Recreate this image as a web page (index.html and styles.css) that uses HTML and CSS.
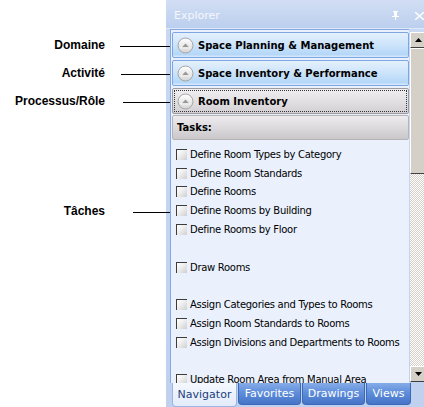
FILE: index.html
```html
<!DOCTYPE html>
<html>
<head>
<meta charset="utf-8">
<link rel="stylesheet" href="styles.css">
</head>
<body>
<div class="page">
  <div class="notes">
    <div class="note n-dom"><span class="lbl">Domaine</span><span class="line"></span></div>
    <div class="note n-act"><span class="lbl">Activité</span><span class="line"></span></div>
    <div class="note n-proc"><span class="lbl">Processus/Rôle</span><span class="line"></span></div>
    <div class="note n-task"><span class="lbl">Tâches</span><span class="line"></span></div>
  </div>
  <div class="panel">
    <div class="hdr">
      <span class="title">Explorer</span>
      <svg class="pin" width="7" height="9" viewBox="0 0 7 9"><path d="M1 0h5v1H5v4h2v1H4v3H3V6H0V5h2V1H1z" fill="#fff"/></svg>
      <svg class="close" width="9" height="8" viewBox="0 0 9 8"><path d="M1 0l3.5 3 3.5-3h1v1L5.5 4 9 7v1H8L4.5 5 1 8H0V7l3.5-3L0 1V0z" fill="#fff"/></svg>
    </div>
    <div class="main">
      <div class="content">
        <div class="sect blue"><span class="chev"><svg width="17" height="17" viewBox="0 0 17 17"><defs><linearGradient id="g1" x1="0" y1="0" x2="0" y2="1"><stop offset="0" stop-color="#ffffff"/><stop offset="1" stop-color="#d6d6d6"/></linearGradient></defs><circle cx="8.5" cy="8.5" r="7.5" fill="url(#g1)" stroke="#a4a4a4"/><path d="M3.8 10.8 8.5 5.8l4.7 5z" fill="#9a9a9a" stroke="#fff" stroke-width="1"/></svg></span>Space Planning &amp; Management</div>
        <div class="sect blue"><span class="chev"><svg width="17" height="17" viewBox="0 0 17 17"><circle cx="8.5" cy="8.5" r="7.5" fill="url(#g1)" stroke="#a4a4a4"/><path d="M3.8 10.8 8.5 5.8l4.7 5z" fill="#9a9a9a" stroke="#fff" stroke-width="1"/></svg></span>Space Inventory &amp; Performance</div>
        <div class="sect gray"><div class="focus"><span class="chev"><svg width="17" height="17" viewBox="0 0 17 17"><circle cx="8.5" cy="8.5" r="7.5" fill="url(#g1)" stroke="#a4a4a4"/><path d="M3.8 10.8 8.5 5.8l4.7 5z" fill="#9a9a9a" stroke="#fff" stroke-width="1"/></svg></span>Room Inventory</div></div>
        <div class="tasks">Tasks:</div>
        <ul class="items">
          <li><i class="cb"></i>Define Room Types by Category</li>
          <li><i class="cb"></i>Define Room Standards</li>
          <li><i class="cb"></i>Define Rooms</li>
          <li><i class="cb"></i>Define Rooms by Building</li>
          <li><i class="cb"></i>Define Rooms by Floor</li>
          <li class="gap"></li>
          <li><i class="cb"></i>Draw Rooms</li>
          <li class="gap"></li>
          <li><i class="cb"></i>Assign Categories and Types to Rooms</li>
          <li><i class="cb"></i>Assign Room Standards to Rooms</li>
          <li><i class="cb"></i>Assign Divisions and Departments to Rooms</li>
          <li class="gap"></li>
          <li><i class="cb"></i>Update Room Area from Manual Area</li>
        </ul>
      </div>
      <div class="sbar">
        <div class="sbtn"><svg width="7" height="4" viewBox="0 0 7 4"><path d="M3.5 0 7 4H0z" fill="#000"/></svg></div>
        <div class="thumb"></div>
        <div class="track"></div>
        <div class="sbtn"><svg width="7" height="4" viewBox="0 0 7 4"><path d="M0 0h7L3.5 4z" fill="#000"/></svg></div>
      </div>
    </div>
    <div class="tabs">
      <div class="tab on">Navigator</div>
      <div class="tab">Favorites</div>
      <div class="tab">Drawings</div>
      <div class="tab">Views</div>
    </div>
  </div>
</div>
</body>
</html>
```
FILE: styles.css
```css
html, body {
  margin: 0;
  padding: 0;
  background: #fff;
  overflow: hidden;
}
.page {
  display: flex;
  width: 424px;
  height: 407px;
  overflow: hidden;
}
.notes {
  width: 166px;
  flex: none;
  font-family: "Liberation Sans", Arial, sans-serif;
  font-weight: bold;
  font-size: 12px;
  color: #000;
  padding-top: 37px;
}
.note {
  display: flex;
  align-items: center;
  height: 16px;
}
.lbl {
  width: 105px;
  text-align: right;
  flex: none;
}
.line {
  flex: 1;
  height: 1px;
  background: #000;
  margin-right: -4px;
  position: relative;
  top: 1px;
}
.n-dom .line { margin-left: 15px; }
.n-act { margin-top: 12px; }
.n-act .line { margin-left: 16px; }
.n-proc { margin-top: 12px; }
.n-proc .line { margin-left: 18px; }
.n-task { margin-top: 94px; }
.n-task .line { margin-left: 28px; }

.panel {
  width: 259px;
  flex: none;
  height: 407px;
  display: flex;
  flex-direction: column;
  background: linear-gradient(#c9d9f3, #bfd1ef);
  font-family: "DejaVu Sans", Verdana, sans-serif;
}
.hdr {
  height: 29px;
  flex: none;
  display: flex;
  align-items: center;
  background: linear-gradient(#d2def4, #bccfee);
  border-bottom: 1px solid #dfe8f8;
  box-sizing: border-box;
  padding-top: 3px;
}
.title {
  margin-left: 8px;
  font-size: 11px;
  color: #f4f7fc;
  flex: 1;
}
.pin { margin-right: 16px; }
.close { margin-right: 1px; }

.main {
  flex: 1;
  display: flex;
  min-height: 0;
  margin-left: 4px;
}
.content {
  width: 239px;
  flex: none;
  box-sizing: border-box;
  border-left: 1px solid #85a8e0;
  border-top: 1px solid #85a8e0;
  background: #eaf1fd;
  padding: 2px 0 0 1px;
  overflow: hidden;
}
.sect {
  height: 26px;
  box-sizing: border-box;
  display: flex;
  align-items: center;
  font-weight: bold;
  font-size: 10px;
  color: #000;
  border-radius: 2px;
  margin-bottom: 1px;
}
.sect.blue {
  border: 1px solid #7ea6e2;
  background: linear-gradient(#e4f0fd 0%, #cfe5fb 45%, #b4d7f8 90%, #dcebfc 100%);
  padding-left: 4px;
  margin-bottom: 2px;
}
.sect.gray {
  border: 1px solid #9d9a9e;
  background: linear-gradient(#f1eff2 0%, #e3e0e4 50%, #d3cfd4 100%);
  padding: 1px;
}
.focus {
  flex: 1;
  align-self: stretch;
  display: flex;
  align-items: center;
  outline: 1px dotted #333;
  outline-offset: -1px;
  padding-left: 3px;
}
.chev {
  width: 17px;
  height: 17px;
  margin-right: 4px;
  display: block;
}
.chev svg { display: block; }
.tasks {
  height: 25px;
  box-sizing: border-box;
  display: flex;
  align-items: center;
  padding-left: 4px;
  font-weight: bold;
  font-size: 10px;
  border: 1px solid #b6b3b7;
  border-radius: 2px;
  background: linear-gradient(#eeecee 0%, #dcdadc 50%, #c9c7c9 100%);
}
.items {
  list-style: none;
  margin: 0;
  padding: 5px 0 0 4px;
  font-size: 10px;
  letter-spacing: -0.3px;
  color: #000;
}
.items li {
  height: 18.8px;
  display: flex;
  align-items: center;
  white-space: nowrap;
}
.cb {
  width: 11px;
  height: 11px;
  box-sizing: border-box;
  flex: none;
  border-top: 1px solid #3c3c3c;
  border-left: 1px solid #3c3c3c;
  background: linear-gradient(135deg, #ffffff 0%, #f0f0f0 40%, #cfcfcf 100%);
  margin-right: 3px;
}

.sbar {
  width: 16px;
  flex: none;
  display: flex;
  flex-direction: column;
  padding-top: 3px;
  margin-left: 1px;
}
.sbtn {
  height: 16px;
  flex: none;
  box-sizing: border-box;
  background: #d4d0c8;
  border: 1px solid;
  border-color: #fff #404040 #404040 #fff;
  display: flex;
  align-items: center;
  justify-content: center;
}
.thumb {
  height: 126px;
  flex: none;
  box-sizing: border-box;
  background: #d4d0c8;
  border: 1px solid;
  border-color: #fff #404040 #404040 #fff;
}
.track {
  flex: 1;
  background: repeating-conic-gradient(#d4d0c8 0 25%, #fff 0 50%) 0 0 / 2px 2px;
}
.sbar .sbtn:last-child { margin-bottom: 1px; }

.tabs {
  height: 24px;
  flex: none;
  display: flex;
  padding-left: 6px;
  align-items: flex-start;
}
.tab {
  height: 22px;
  box-sizing: border-box;
  display: flex;
  align-items: center;
  justify-content: center;
  font-size: 11px;
  color: #fff;
  border: 1px solid #3c68b6;
  border-top: none;
  border-radius: 0 0 4px 4px;
  background: linear-gradient(#86ace8 0%, #5f8edb 45%, #4674c8 100%);
  margin-right: 1px;
}
.tab:nth-child(2) { width: 63px; }
.tab:nth-child(3) { width: 63px; }
.tab:nth-child(4) { width: 45px; }
.tab.on {
  width: 65px;
  height: 24px;
  color: #1c3e7c;
  background: linear-gradient(#f5f8fe, #e3ebfa);
  border-color: #9cb6e2;
}
```
